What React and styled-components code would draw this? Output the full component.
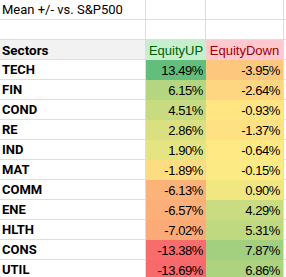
import React from 'react';
import styled, { createGlobalStyle } from 'styled-components';

const Global = createGlobalStyle`
  html, body { margin: 0; padding: 0; background: #ffffff; }
  body { overflow: hidden; }
`;

const GRID = '#DEDEDE';

const rows = [
  ['TECH', 13.49, -3.95],
  ['FIN', 6.15, -2.64],
  ['COND', 4.51, -0.93],
  ['RE', 2.86, -1.37],
  ['IND', 1.9, -0.64],
  ['MAT', -1.89, -0.15],
  ['COMM', -6.13, 0.9],
  ['ENE', -6.57, 4.29],
  ['HLTH', -7.02, 5.31],
  ['CONS', -13.38, 7.87],
  ['UTIL', -13.69, 6.86],
];

const all = rows.flatMap((r) => [r[1], r[2]]).sort((a, b) => a - b);
const MIN = all[0];
const MAX = all[all.length - 1];
const MID = (all[all.length / 2 - 1] + all[all.length / 2]) / 2;

const RED = [248, 105, 107];
const YEL = [255, 235, 132];
const GRN = [99, 190, 123];

const mix = (a, b, t) => a.map((v, i) => Math.round(v + (b[i] - v) * t));
const scale = (v) => {
  const c = v <= MID ? mix(RED, YEL, (v - MIN) / (MID - MIN)) : mix(YEL, GRN, (v - MID) / (MAX - MID));
  return `rgb(${c[0]}, ${c[1]}, ${c[2]})`;
};

const Sheet = styled.div`
  display: grid;
  grid-template-columns: 146px 60px 77px 1fr;
  grid-auto-rows: 20px;
  width: 286px;
`;

const BaseCell = styled.div`
  box-sizing: border-box;
  display: flex;
  align-items: center;
  white-space: nowrap;
  overflow: hidden;
  color: #000;
`;

const TitleCell = styled(BaseCell)`
  border-bottom: 1px solid ${GRID};
  border-right: 1px solid ${GRID};
  padding-left: 2px;
  font-family: Roboto, "Liberation Sans", sans-serif;
  font-size: 13px;
`;

const BlankCell = styled(BaseCell)`
  border-bottom: 1px solid ${GRID};
  border-right: ${(p) => (p.$edge ? 'none' : `1px solid ${GRID}`)};
`;

const EdgeCell = styled(BaseCell)`
  border-left: 1px solid ${GRID};
  border-bottom: 1px solid ${GRID};
`;

const SectorHeader = styled(BaseCell)`
  background: #f2f2f2;
  border-bottom: 1px solid ${GRID};
  border-right: 1px solid ${GRID};
  padding-left: 2px;
  font-family: Roboto, "Liberation Sans", sans-serif;
  font-weight: 700;
  font-size: 13.5px;
`;

const StyleHeader = styled(BaseCell)`
  justify-content: center;
  background: ${(p) => (p.$bad ? '#FFC7CE' : '#C6EFCE')};
  color: ${(p) => (p.$bad ? '#9C0006' : '#006100')};
  font-family: "Liberation Sans", Arial, sans-serif;
  font-size: 13px;
`;

const SectorCell = styled(BaseCell)`
  border-bottom: 1px solid ${GRID};
  border-right: 1px solid ${GRID};
  padding-left: 2px;
  font-family: Roboto, "Liberation Sans", sans-serif;
  font-weight: 700;
  font-size: 13px;
`;

const ValueCell = styled(BaseCell)`
  justify-content: flex-end;
  padding-right: 3px;
  background: ${(p) => p.$fill};
  font-family: "Liberation Sans", Arial, sans-serif;
  font-size: 13px;
  letter-spacing: -0.4px;
`;

const fmt = (v) => `${v.toFixed(2)}%`;

export default function App() {
  return (
    <>
      <Global />
      <Sheet>
        <TitleCell>Mean +/- vs. S&amp;P500</TitleCell>
        <BlankCell />
        <BlankCell $edge />
        <EdgeCell />

        <BlankCell />
        <BlankCell />
        <BlankCell $edge />
        <EdgeCell />

        <SectorHeader>Sectors</SectorHeader>
        <StyleHeader>EquityUP</StyleHeader>
        <StyleHeader $bad>EquityDown</StyleHeader>
        <EdgeCell />

        {rows.map(([name, up, down]) => (
          <React.Fragment key={name}>
            <SectorCell>{name}</SectorCell>
            <ValueCell $fill={scale(up)}>{fmt(up)}</ValueCell>
            <ValueCell $fill={scale(down)}>{fmt(down)}</ValueCell>
            <EdgeCell />
          </React.Fragment>
        ))}
      </Sheet>
    </>
  );
}
